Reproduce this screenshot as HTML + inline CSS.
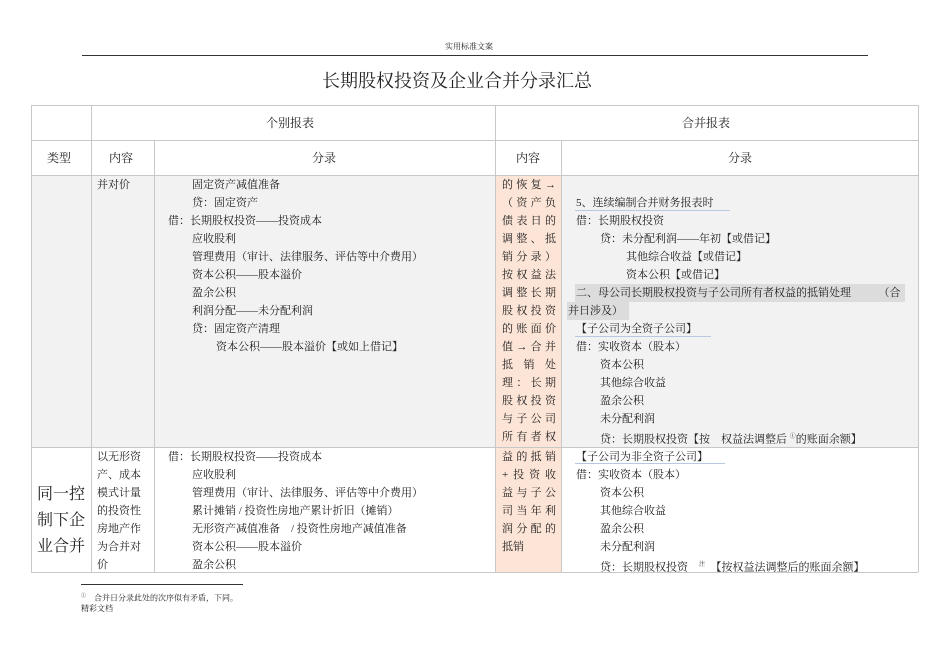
<!DOCTYPE html>
<html><head><meta charset="utf-8"><style>
*{margin:0;padding:0;box-sizing:border-box}
body{width:950px;height:672px;background:#fff;position:relative;font-family:"Liberation Serif","Noto Serif CJK SC","Noto Sans CJK SC",serif;color:#222;overflow:hidden}
.a{position:absolute;white-space:nowrap;font-size:11px;line-height:18px}
.b{position:absolute}
.h{border-top:1px solid #c8c8c8}
.v{border-left:1px solid #c8c8c8}
.or{position:absolute;left:502px;width:54px;font-size:11px;line-height:18px;display:flex;justify-content:space-between}
</style></head><body>
<div class="a" style="left:445px;top:38px;font-size:8px">实用标准文案</div>
<div class="b" style="left:82px;top:55px;width:786px;border-top:1px solid #333"></div>
<div class="a" style="left:322px;top:70px;font-size:18px;line-height:22px">长期股权投资及企业合并分录汇总</div>

<!-- backgrounds -->
<div class="b" style="left:31px;top:175px;width:464px;height:272px;background:#f2f2f2"></div>
<div class="b" style="left:495px;top:175px;width:66px;height:397px;background:#fce4d6"></div>
<div class="b" style="left:561px;top:175px;width:357px;height:272px;background:#f2f2f2"></div>
<div class="b" style="left:575px;top:284px;width:330px;height:18px;background:#dcdcdc"></div>
<div class="b" style="left:567px;top:302px;width:62px;height:18px;background:#dcdcdc"></div>

<!-- grid -->
<div class="b h" style="left:31px;top:105px;width:887px"></div>
<div class="b h" style="left:31px;top:140px;width:887px"></div>
<div class="b h" style="left:31px;top:175px;width:887px"></div>
<div class="b h" style="left:31px;top:447px;width:887px"></div>
<div class="b h" style="left:31px;top:572px;width:887px"></div>
<div class="b v" style="left:31px;top:105px;height:467px"></div>
<div class="b v" style="left:91px;top:105px;height:467px"></div>
<div class="b v" style="left:154px;top:140px;height:432px"></div>
<div class="b v" style="left:495px;top:105px;height:467px"></div>
<div class="b v" style="left:561px;top:140px;height:432px"></div>
<div class="b v" style="left:918px;top:105px;height:467px"></div>

<div class="a" style="left:266px;top:114px;font-size:12px">个别报表</div>
<div class="a" style="left:682px;top:114px;font-size:12px">合并报表</div>
<div class="a" style="left:47px;top:149px;font-size:12px">类型</div>
<div class="a" style="left:109px;top:149px;font-size:12px">内容</div>
<div class="a" style="left:312px;top:149px;font-size:12px">分录</div>
<div class="a" style="left:516px;top:149px;font-size:12px">内容</div>
<div class="a" style="left:728px;top:149px;font-size:12px">分录</div>

<div class="a" style="left:97px;top:176px">并对价</div>
<div class="a" style="left:168px;top:176px">
<div style="padding-left:24px">固定资产减值准备</div>
<div style="padding-left:24px">贷：固定资产</div>
<div>借：长期股权投资——投资成本</div>
<div style="padding-left:24px">应收股利</div>
<div style="padding-left:24px">管理费用（审计、法律服务、评估等中介费用）</div>
<div style="padding-left:24px">资本公积——股本溢价</div>
<div style="padding-left:24px">盈余公积</div>
<div style="padding-left:24px">利润分配——未分配利润</div>
<div style="padding-left:24px">贷：固定资产清理</div>
<div style="padding-left:48px">资本公积——股本溢价【或如上借记】</div>
</div>

<div class="a" style="left:97px;top:448px">以无形资<br>产、成本<br>模式计量<br>的投资性<br>房地产作<br>为合并对<br>价</div>
<div class="a" style="left:37px;top:482px;font-size:16px;line-height:26px">同一控<br>制下企<br>业合并</div>
<div class="a" style="left:168px;top:448px">
<div>借：长期股权投资——投资成本</div>
<div style="padding-left:24px">应收股利</div>
<div style="padding-left:24px">管理费用（审计、法律服务、评估等中介费用）</div>
<div style="padding-left:24px">累计摊销 / 投资性房地产累计折旧（摊销）</div>
<div style="padding-left:24px">无形资产减值准备　/ 投资性房地产减值准备</div>
<div style="padding-left:24px">资本公积——股本溢价</div>
<div style="padding-left:24px">盈余公积</div>
</div>

<div class="or" style="top:176px"><span>的</span><span>恢</span><span>复</span><span>→</span></div>
<div class="or" style="top:194px"><span>（</span><span>资</span><span>产</span><span>负</span></div>
<div class="or" style="top:212px"><span>债</span><span>表</span><span>日</span><span>的</span></div>
<div class="or" style="top:230px"><span>调</span><span>整</span><span>、</span><span>抵</span></div>
<div class="or" style="top:248px"><span>销</span><span>分</span><span>录</span><span>）</span></div>
<div class="or" style="top:266px"><span>按</span><span>权</span><span>益</span><span>法</span></div>
<div class="or" style="top:284px"><span>调</span><span>整</span><span>长</span><span>期</span></div>
<div class="or" style="top:302px"><span>股</span><span>权</span><span>投</span><span>资</span></div>
<div class="or" style="top:320px"><span>的</span><span>账</span><span>面</span><span>价</span></div>
<div class="or" style="top:338px"><span>值</span><span>→</span><span>合</span><span>并</span></div>
<div class="or" style="top:356px"><span>抵</span><span>销</span><span>处</span></div>
<div class="or" style="top:374px"><span>理</span><span>：</span><span>长</span><span>期</span></div>
<div class="or" style="top:392px"><span>股</span><span>权</span><span>投</span><span>资</span></div>
<div class="or" style="top:410px"><span>与</span><span>子</span><span>公</span><span>司</span></div>
<div class="or" style="top:428px"><span>所</span><span>有</span><span>者</span><span>权</span></div>
<div class="or" style="top:448px"><span>益</span><span>的</span><span>抵</span><span>销</span></div>
<div class="or" style="top:466px"><span>+</span><span>投</span><span>资</span><span>收</span></div>
<div class="or" style="top:484px"><span>益</span><span>与</span><span>子</span><span>公</span></div>
<div class="or" style="top:502px"><span>司</span><span>当</span><span>年</span><span>利</span></div>
<div class="or" style="top:520px"><span>润</span><span>分</span><span>配</span><span>的</span></div>
<div class="a" style="left:502px;top:538px">抵销</div>

<div class="b" style="left:575px;top:210px;width:155px;border-top:1px solid #b8c8e0"></div>
<div class="b" style="left:575px;top:336px;width:136px;border-top:1px solid #b8c8e0"></div>
<div class="b" style="left:575px;top:463px;width:150px;border-top:1px solid #b8c8e0"></div>
<div class="a" style="left:576px;top:194px">
<div>5、连续编制合并财务报表时</div>
<div>借：长期股权投资</div>
<div style="padding-left:24px">贷：未分配利润——年初【或借记】</div>
<div style="padding-left:50px">其他综合收益【或借记】</div>
<div style="padding-left:50px">资本公积【或借记】</div>
<div>二、母公司长期股权投资与子公司所有者权益的抵销处理　　　（合</div>
<div style="margin-left:-8px">并日涉及）</div>
<div>【子公司为全资子公司】</div>
<div>借：实收资本（股本）</div>
<div style="padding-left:24px">资本公积</div>
<div style="padding-left:24px">其他综合收益</div>
<div style="padding-left:24px">盈余公积</div>
<div style="padding-left:24px">未分配利润</div>
<div style="padding-left:24px">贷：长期股权投资【按　权益法调整后 <sup style="font-size:6px">①</sup>的账面余额】</div>
</div>
<div class="a" style="left:576px;top:448px">
<div>【子公司为非全资子公司】</div>
<div>借：实收资本（股本）</div>
<div style="padding-left:24px">资本公积</div>
<div style="padding-left:24px">其他综合收益</div>
<div style="padding-left:24px">盈余公积</div>
<div style="padding-left:24px">未分配利润</div>
<div style="padding-left:24px">贷：长期股权投资　<sup style="font-size:6px">注</sup>　【按权益法调整后的账面余额】</div>
</div>

<div class="b" style="left:81px;top:584px;width:162px;border-top:1px solid #333"></div>
<div class="a" style="left:81px;top:591px;font-size:8px;line-height:12px"><sup style="font-size:5px">①</sup>　合并日分录此处的次序似有矛盾，下同。</div>
<div class="a" style="left:81px;top:603px;font-size:8px;line-height:12px">精彩文档</div>
</body></html>
